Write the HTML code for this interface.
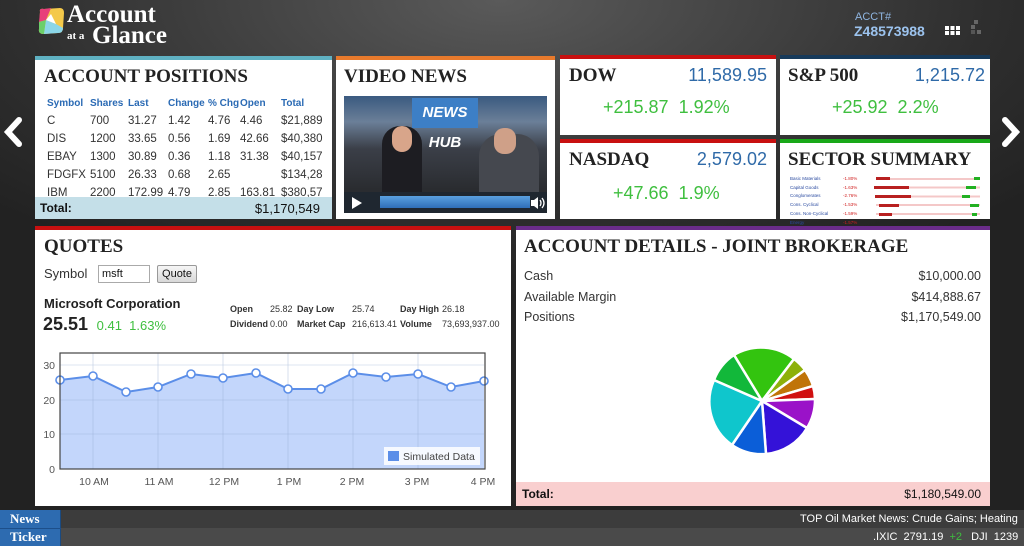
<!DOCTYPE html>
<html><head><meta charset="utf-8"><style>
*{margin:0;padding:0;box-sizing:border-box}
body{width:1024px;height:546px;overflow:hidden;position:relative;font-family:"Liberation Sans",Arial,sans-serif;background:radial-gradient(ellipse 700px 300px at 500px 0px,#5a5a5a,#2e2e2e 70%,#222);}
.p{position:absolute;background:#fff;}
.h{font-family:"Liberation Serif",serif;font-weight:bold;color:#222;font-size:19px;position:absolute;white-space:nowrap}
.abs{position:absolute}
table{border-collapse:collapse}
.pos{table-layout:fixed;width:290px}
.pos td{font-size:11.5px;color:#333;padding:0;height:18px;white-space:nowrap;overflow:visible}
.pos th{font-size:10px;color:#2a6ab4;text-align:left;font-weight:bold;height:17px;white-space:nowrap}
.g{color:#3fbf3f}
.blue{color:#2f6aa8}
.qs{position:absolute;font-size:9px;color:#333;white-space:nowrap}
.qs b{position:absolute}
.qs span{position:absolute}
</style></head><body>
<svg class="abs" style="left:36px;top:6px" width="30" height="30" viewBox="0 0 30 30">
<path d="M4 6 Q3 2 8 3 L24 2 Q28 2 28 7 L27 22 Q27 27 22 27 L8 28 Q2 28 3 23Z" fill="#f4c94a"/>
<path d="M4 6 Q3 2 8 3 L15 2 L10 14 L3 16Z" fill="#e8407a"/>
<path d="M3 16 L10 14 L8 28 Q2 28 3 23Z" fill="#6ccf6a"/>
<path d="M8 28 L10 14 L20 18 L27 22 Q27 27 22 27Z" fill="#8bd6e8"/>
<path d="M10 14 L15 8 L20 18Z" fill="#fff"/>
</svg>
<div class="abs" style="left:67px;top:2px;font-family:'Liberation Serif',serif;font-weight:bold;color:#fff;font-size:25px;line-height:26px">Account</div>
<div class="abs" style="left:67px;top:30px;font-family:'Liberation Serif',serif;font-weight:bold;color:#fff;font-size:11px">at a</div>
<div class="abs" style="left:92px;top:23px;font-family:'Liberation Serif',serif;font-weight:bold;color:#fff;font-size:25px;line-height:26px">Glance</div>
<div class="abs" style="left:855px;top:11px;color:#8fb5e0;font-size:11px">ACCT#</div>
<div class="abs" style="left:854px;top:23px;color:#9cc3ee;font-size:14px;font-weight:bold">Z48573988</div>
<div class="abs" style="left:945px;top:26px;width:15px;height:9px;background:repeating-linear-gradient(90deg,#fff 0 4px,transparent 4px 5.5px);"><div style="position:absolute;top:4px;left:0;width:15px;height:1px;background:#2e2e2e"></div></div>
<div class="abs" style="left:974px;top:20px;width:4px;height:4px;background:#666"></div>
<div class="abs" style="left:971px;top:25px;width:4px;height:4px;background:#666"></div>
<div class="abs" style="left:977px;top:30px;width:4px;height:4px;background:#666"></div>
<div class="abs" style="left:971px;top:30px;width:4px;height:4px;background:#555"></div>
<svg class="abs" style="left:2px;top:117px" width="22" height="30"><path d="M17 3 L6 15 L17 27" stroke="#fff" stroke-width="6" fill="none" stroke-linecap="round"/></svg>
<svg class="abs" style="left:1000px;top:117px" width="22" height="30"><path d="M5 3 L16 15 L5 27" stroke="#fff" stroke-width="6" fill="none" stroke-linecap="round"/></svg>

<div class="p" style="left:35px;top:56px;width:297px;height:163px;border-top:4px solid #5fb1c2;overflow:hidden">
<div class="h" style="left:9px;top:6px">ACCOUNT POSITIONS</div>
<table class="pos abs" style="left:12px;top:35px">
<colgroup><col style="width:43px"><col style="width:38px"><col style="width:40px"><col style="width:40px"><col style="width:32px"><col style="width:41px"><col style="width:56px"></colgroup>
<tr><th>Symbol</th><th>Shares</th><th>Last</th><th>Change</th><th>% Chg</th><th>Open</th><th>Total</th></tr>
<tr><td>C</td><td>700</td><td>31.27</td><td class="g">1.42</td><td class="g">4.76</td><td>4.46</td><td>$21,889</td></tr>
<tr><td>DIS</td><td>1200</td><td>33.65</td><td class="g">0.56</td><td class="g">1.69</td><td>42.66</td><td>$40,380</td></tr>
<tr><td>EBAY</td><td>1300</td><td>30.89</td><td class="g">0.36</td><td class="g">1.18</td><td>31.38</td><td>$40,157</td></tr>
<tr><td>FDGFX</td><td>5100</td><td>26.33</td><td class="g">0.68</td><td class="g">2.65</td><td></td><td>$134,28</td></tr>
<tr><td>IBM</td><td>2200</td><td>172.99</td><td class="g">4.79</td><td class="g">2.85</td><td>163.81</td><td>$380,57</td></tr>
</table>
<div class="abs" style="left:0;top:137px;width:297px;height:22px;background:#c4dfe8;font-size:12px;font-weight:bold;color:#111"><span class="abs" style="left:5px;top:4px">Total:</span><span class="abs" style="right:12px;top:4px;font-weight:normal;font-size:13px">$1,170,549</span></div>
</div>

<div class="p" style="left:336px;top:56px;width:219px;height:163px;border-top:4px solid #e87a2c">
<div class="h" style="left:8px;top:6px">VIDEO NEWS</div>
<div class="abs" style="left:8px;top:36px;width:203px;height:117px;background:linear-gradient(180deg,#3a5a80 0%,#6b7f98 22%,#3b3f48 45%,#2a2c30 80%);overflow:hidden">
<div class="abs" style="left:68px;top:2px;width:66px;height:30px;background:#3d7fc6"></div>
<div class="abs" style="left:68px;top:2px;width:66px;height:30px;color:#fff;font-weight:bold;font-style:italic;font-size:15px;text-align:center;line-height:30px">NEWS HUB</div>
<div class="abs" style="left:38px;top:30px;width:40px;height:68px;background:#1d1d22;border-radius:18px 18px 0 0"></div>
<div class="abs" style="left:48px;top:30px;width:20px;height:26px;background:#d8a58a;border-radius:10px"></div>
<div class="abs" style="left:135px;top:38px;width:60px;height:60px;background:#45484f;border-radius:22px 22px 0 0"></div>
<div class="abs" style="left:150px;top:32px;width:22px;height:26px;background:#cfa088;border-radius:10px"></div>
<div class="abs" style="left:0;top:96px;width:203px;height:21px;background:#1f2730"></div>
<div class="abs" style="left:36px;top:100px;width:150px;height:12px;background:linear-gradient(#5aa0e0,#2f6fb8)"></div>
<svg class="abs" style="left:6px;top:99px" width="14" height="16"><path d="M2 2 L12 8 L2 14Z" fill="#fff"/></svg>
<svg class="abs" style="left:186px;top:100px" width="16" height="14"><path d="M1 4 h3 l4 -3 v12 l-4 -3 h-3z" fill="#fff"/><path d="M10 4 q2 3 0 6 M12 2 q4 5 0 10" stroke="#fff" fill="none" stroke-width="1.3"/></svg>
</div>
</div>

<div class="p" style="left:560px;top:55px;width:216px;height:80px;border-top:4px solid #c81010">
<div class="h" style="left:9px;top:6px">DOW</div>
<div class="abs blue" style="right:9px;top:6px;font-size:18px">11,589.95</div>
<div class="abs g" style="left:43px;top:38px;font-size:18px">+215.87&nbsp; 1.92%</div>
</div>
<div class="p" style="left:780px;top:55px;width:210px;height:80px;border-top:4px solid #173a5a">
<div class="h" style="left:8px;top:6px">S&amp;P 500</div>
<div class="abs blue" style="right:5px;top:6px;font-size:18px">1,215.72</div>
<div class="abs g" style="left:52px;top:38px;font-size:18px">+25.92&nbsp; 2.2%</div>
</div>
<div class="p" style="left:560px;top:139px;width:216px;height:80px;border-top:4px solid #c81010">
<div class="h" style="left:9px;top:6px">NASDAQ</div>
<div class="abs blue" style="right:9px;top:6px;font-size:18px">2,579.02</div>
<div class="abs g" style="left:53px;top:40px;font-size:18px">+47.66&nbsp; 1.9%</div>
</div>
<div class="p" style="left:780px;top:139px;width:210px;height:80px;border-top:4px solid #18a818">
<div class="h" style="left:8px;top:6px">SECTOR SUMMARY</div>
<div class="abs" style="left:10px;top:32px;font-size:4.5px;line-height:8.7px;color:#2a4aa0">Basic Materials<br>Capital Goods<br>Conglomerates<br>Cons. Cyclical<br>Cons. Non-Cyclical<br>Energy</div>
<div class="abs" style="left:63px;top:32px;font-size:4.5px;line-height:8.7px;color:#d02020">-1.80%<br>-1.63%<br>-2.76%<br>-1.53%<br>-1.59%<br>-1.57%</div>
<div class="abs" style="left:96px;top:34px;width:104px;height:44px;background:repeating-linear-gradient(180deg,transparent 0 1px,#f4c8c8 1px 3px,transparent 3px 8.7px);"></div>
<div class="abs" style="left:96px;top:34px;width:14px;height:3px;background:#b82020"></div><div class="abs" style="left:194px;top:34px;width:6px;height:3px;background:#22b022"></div>
<div class="abs" style="left:94px;top:43px;width:35px;height:3px;background:#b82020"></div><div class="abs" style="left:186px;top:43px;width:10px;height:3px;background:#22b022"></div>
<div class="abs" style="left:95px;top:52px;width:36px;height:3px;background:#b82020"></div><div class="abs" style="left:182px;top:52px;width:8px;height:3px;background:#22b022"></div>
<div class="abs" style="left:99px;top:61px;width:20px;height:3px;background:#b82020"></div><div class="abs" style="left:190px;top:61px;width:9px;height:3px;background:#22b022"></div>
<div class="abs" style="left:99px;top:70px;width:13px;height:3px;background:#b82020"></div><div class="abs" style="left:192px;top:70px;width:5px;height:3px;background:#22b022"></div>
</div>

<div class="p" style="left:35px;top:226px;width:476px;height:280px;border-top:4px solid #c81010">
<div class="h" style="left:9px;top:6px">QUOTES</div>
<div class="abs" style="left:9px;top:36px;font-size:13px;color:#333">Symbol</div>
<div class="abs" style="left:63px;top:35px;width:52px;height:18px;border:1px solid #aaa;font-size:11px;padding:2px 3px;color:#111">msft</div>
<div class="abs" style="left:122px;top:35px;width:40px;height:18px;border:1px solid #999;border-radius:2px;background:linear-gradient(#f6f6f6,#d8d8d8);font-size:11px;text-align:center;line-height:16px;color:#111">Quote</div>
<div class="abs" style="left:9px;top:66px;font-size:13px;font-weight:bold;color:#222">Microsoft Corporation</div>
<div class="abs" style="left:8px;top:84px;font-size:18px;font-weight:bold;color:#222">25.51 <span class="g" style="font-size:13px;font-weight:normal">&nbsp;0.41&nbsp; 1.63%</span></div>
<div class="qs" style="left:0;top:74px"><b style="left:195px">Open</b><span style="left:235px">25.82</span><b style="left:262px">Day Low</b><span style="left:317px">25.74</span><b style="left:365px">Day High</b><span style="left:407px">26.18</span></div>
<div class="qs" style="left:0;top:89px"><b style="left:195px">Dividend</b><span style="left:235px">0.00</span><b style="left:262px">Market Cap</b><span style="left:317px">216,613.41</span><b style="left:365px">Volume</b><span style="left:407px">73,693,937.00</span></div>
<svg class="abs" style="left:0;top:110px" width="476" height="150" font-family="Liberation Sans,sans-serif">
<g transform="translate(-35,-336)">
<path d="M60 376 L93 372 L126 388 L158 383 L191 370 L223 374 L256 369 L288 385 L321 385 L353 369 L386 373 L418 370 L451 383 L484 377 L484 465 L60 465Z" fill="#c3d6fb"/>
<g stroke="#8fa7cf" stroke-width="0.6" opacity="0.6"><line x1="93" y1="349" x2="93" y2="465"/><line x1="158" y1="349" x2="158" y2="465"/><line x1="223" y1="349" x2="223" y2="465"/><line x1="288" y1="349" x2="288" y2="465"/><line x1="353" y1="349" x2="353" y2="465"/><line x1="418" y1="349" x2="418" y2="465"/>
<line x1="60" y1="361" x2="484" y2="361"/><line x1="60" y1="396" x2="484" y2="396"/><line x1="60" y1="430" x2="484" y2="430"/></g>
<path d="M60 376 L93 372 L126 388 L158 383 L191 370 L223 374 L256 369 L288 385 L321 385 L353 369 L386 373 L418 370 L451 383 L484 377" fill="none" stroke="#5b8ee8" stroke-width="2"/>
<g fill="#fff" stroke="#5b8ee8" stroke-width="1.6">
<circle cx="60" cy="376" r="4"/><circle cx="93" cy="372" r="4"/><circle cx="126" cy="388" r="4"/><circle cx="158" cy="383" r="4"/><circle cx="191" cy="370" r="4"/><circle cx="223" cy="374" r="4"/><circle cx="256" cy="369" r="4"/><circle cx="288" cy="385" r="4"/><circle cx="321" cy="385" r="4"/><circle cx="353" cy="369" r="4"/><circle cx="386" cy="373" r="4"/><circle cx="418" cy="370" r="4"/><circle cx="451" cy="383" r="4"/><circle cx="484" cy="377" r="4"/></g>
<rect x="60" y="349" width="425" height="116" fill="none" stroke="#444" stroke-width="1.2"/>
<rect x="384" y="443" width="96" height="18" fill="#fff" opacity="0.85"/>
<rect x="388" y="447" width="11" height="10" fill="#5b8ee8"/>
<text x="403" y="456" font-size="10.5" fill="#444">Simulated Data</text>
<g font-size="10.5" fill="#555" text-anchor="end"><text x="55" y="365">30</text><text x="55" y="400">20</text><text x="55" y="434">10</text><text x="55" y="469">0</text></g>
<g font-size="10.5" fill="#555" text-anchor="middle"><text x="94" y="481">10 AM</text><text x="159" y="481">11 AM</text><text x="224" y="481">12 PM</text><text x="289" y="481">1 PM</text><text x="352" y="481">2 PM</text><text x="417" y="481">3 PM</text><text x="483" y="481">4 PM</text></g>
</g></svg>
</div>

<div class="p" style="left:516px;top:226px;width:474px;height:280px;border-top:4px solid #6a2c8a">
<div class="h" style="left:8px;top:6px">ACCOUNT DETAILS - JOINT BROKERAGE</div>
<div class="abs" style="left:8px;top:36px;font-size:12.5px;color:#333;line-height:20.5px">Cash<br>Available Margin<br>Positions</div>
<div class="abs" style="right:9px;top:36px;font-size:12.5px;color:#333;line-height:20.5px;text-align:right">$10,000.00<br>$414,888.67<br>$1,170,549.00</div>
<svg class="abs" style="left:191px;top:116px" width="110" height="110" viewBox="-55 -55 110 110">
<g stroke="#fff" stroke-width="2.5">
<path d="M0 0 L-28 -46 A53 53 0 0 1 32 -42Z" fill="#33c40f"/>
<path d="M0 0 L32 -42 A53 53 0 0 1 43 -31Z" fill="#8db00a"/>
<path d="M0 0 L43 -31 A53 53 0 0 1 51 -15Z" fill="#c07408"/>
<path d="M0 0 L51 -15 A53 53 0 0 1 53 -2Z" fill="#d01010"/>
<path d="M0 0 L53 -2 A53 53 0 0 1 45 27Z" fill="#9a12c8"/>
<path d="M0 0 L45 27 A53 53 0 0 1 4 53Z" fill="#3412d8"/>
<path d="M0 0 L4 53 A53 53 0 0 1 -30 44Z" fill="#0b5ed8"/>
<path d="M0 0 L-30 44 A53 53 0 0 1 -48 -21Z" fill="#0fc6cc"/>
<path d="M0 0 L-48 -21 A53 53 0 0 1 -28 -46Z" fill="#12b83a"/>
</g></svg>
<div class="abs" style="left:0;top:252px;width:474px;height:24px;background:#f9cfcf;font-size:12px;color:#111"><b class="abs" style="left:6px;top:5px">Total:</b><span class="abs" style="right:9px;top:5px">$1,180,549.00</span></div>
</div>

<div class="abs" style="left:0;top:510px;width:1024px;height:18px;background:#3c3c3c"></div>
<div class="abs" style="left:0;top:528px;width:1024px;height:18px;background:#4a4a4a"></div>
<div class="abs" style="left:0;top:510px;width:61px;height:36px;background:#2d6bb0;border-right:1px solid #1a4a80"></div>
<div class="abs" style="left:0;top:528px;width:61px;height:1px;background:#1d4f8a"></div>
<div class="abs" style="left:10px;top:511px;font-family:'Liberation Serif',serif;font-weight:bold;color:#fff;font-size:13px">News</div>
<div class="abs" style="left:10px;top:529px;font-family:'Liberation Serif',serif;font-weight:bold;color:#fff;font-size:13px">Ticker</div>
<div class="abs" style="left:800px;top:513px;font-size:11px;color:#fff;white-space:nowrap">TOP Oil Market News: Crude Gains; Heating</div>
<div class="abs" style="left:873px;top:531px;font-size:11px;color:#fff;white-space:nowrap">.IXIC&nbsp; 2791.19&nbsp; <span style="color:#3fbf3f">+2</span>&nbsp;&nbsp; DJI&nbsp; 1239</div>
</body></html>
